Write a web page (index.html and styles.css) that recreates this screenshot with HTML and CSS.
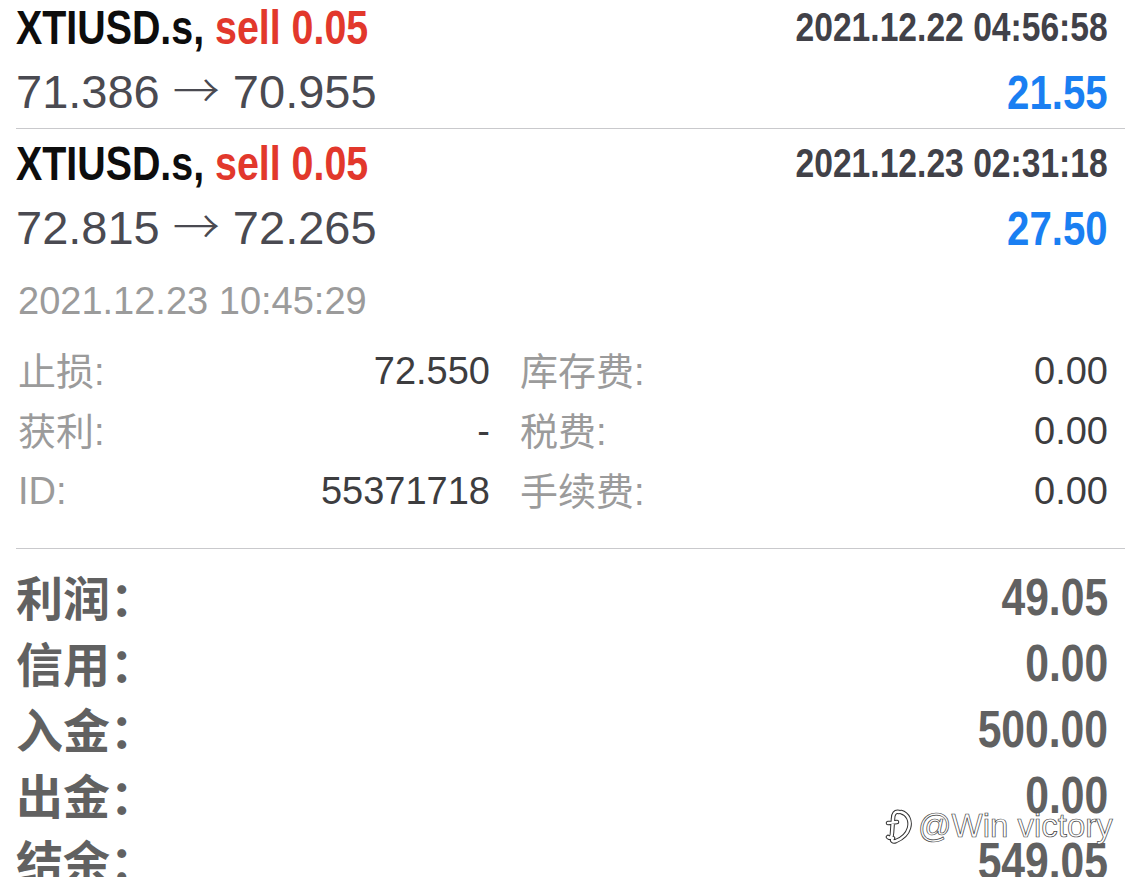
FILE: index.html
```html
<!DOCTYPE html>
<html lang="zh-CN">
<head>
    <meta charset="UTF-8">
    <title>历史</title>
    <link rel="stylesheet" href="styles.css">
</head>
<body>
    <div class="history">
        <div class="deal first">
            <div class="deal-head">
                <span class="symbol narrow">XTIUSD.s, <span class="side">sell 0.05</span></span>
                <span class="time narrow">2021.12.22 04:56:58</span>
            </div>
            <div class="deal-prices">
                <span class="prices">71.386 <span class="arrow">→</span> 70.955</span>
                <span class="profit narrow">21.55</span>
            </div>
        </div>

        <div class="deal open">
            <div class="deal-head">
                <span class="symbol narrow">XTIUSD.s, <span class="side">sell 0.05</span></span>
                <span class="time narrow">2021.12.23 02:31:18</span>
            </div>
            <div class="deal-prices">
                <span class="prices">72.815 <span class="arrow">→</span> 72.265</span>
                <span class="profit narrow">27.50</span>
            </div>
            <div class="close-time">2021.12.23 10:45:29</div>
            <div class="details">
                <span class="label cjk">止损:</span><span class="value">72.550</span>
                <span class="label cjk second">库存费:</span><span class="value">0.00</span>
                <span class="label cjk">获利:</span><span class="value">-</span>
                <span class="label cjk second">税费:</span><span class="value">0.00</span>
                <span class="label">ID:</span><span class="value">55371718</span>
                <span class="label cjk second">手续费:</span><span class="value">0.00</span>
            </div>
        </div>

        <div class="summary">
            <div class="sum-row"><span class="sum-label">利润：</span><span class="sum-value narrow">49.05</span></div>
            <div class="sum-row"><span class="sum-label">信用：</span><span class="sum-value narrow">0.00</span></div>
            <div class="sum-row"><span class="sum-label">入金：</span><span class="sum-value narrow">500.00</span></div>
            <div class="sum-row"><span class="sum-label">出金：</span><span class="sum-value narrow">0.00</span></div>
            <div class="sum-row"><span class="sum-label">结余：</span><span class="sum-value narrow">549.05</span></div>
        </div>
    </div>

    <div class="watermark">
        <svg class="wm-icon" width="28" height="36" viewBox="0 0 28 36">
            <g fill="none" stroke-linecap="round" stroke-linejoin="round">
                <path class="wm-outline" d="M14 4 C10 3 8 6 8 11 L7 25 C7 29 5 31 3 29 M3 15 L12 14 M16 4 C23 6 26 13 24 20 C22 27 16 31 11 33 C8 34 6 33 8 30"/>
                <path class="wm-fill" d="M14 4 C10 3 8 6 8 11 L7 25 C7 29 5 31 3 29 M3 15 L12 14 M16 4 C23 6 26 13 24 20 C22 27 16 31 11 33 C8 34 6 33 8 30"/>
            </g>
        </svg>
        <span class="wm-text">@Win victory</span>
    </div>
</body>
</html>
```

FILE: styles.css
```css
body, html {
    margin: 0;
    padding: 0;
    background: #fff;
    overflow: hidden;
    height: 100%;
}

body {
    position: relative;
    font-family: "Liberation Sans", "Noto Sans CJK SC", sans-serif;
}

.history {
    padding-left: 16px;
    margin-top: -7px;
}

/* condensed bold, like the app's Helvetica Condensed */
.narrow {
    display: inline-block;
    font-family: "Liberation Sans", sans-serif;
    font-weight: bold;
    transform: scaleX(0.82);
    transform-origin: right center;
    white-space: nowrap;
}

.deal {
    padding: 2px 17px 0 0;
}

.deal.first {
    padding-bottom: 3px;
    border-bottom: 1px solid #c9c9cc;
}

.deal.open {
    padding-bottom: 27px;
    border-bottom: 1px solid #c9c9cc;
}

.deal-head,
.deal-prices {
    display: flex;
    justify-content: space-between;
    align-items: center;
}

.deal-head {
    height: 64px;
}

.deal-prices {
    height: 66px;
}

.symbol {
    font-size: 48px;
    color: #0d0d0d;
    transform-origin: left center;
}

.side {
    color: #e2382c;
}

.time {
    font-size: 41px;
    color: #414148;
}

.prices {
    font-size: 47px;
    line-height: 54px;
    color: #4a4a51;
    white-space: nowrap;
}

.arrow {
    font-family: "Noto Sans CJK SC", sans-serif;
    font-weight: 300;
    line-height: 0;
}

.profit {
    font-size: 49px;
    color: #1a7ff2;
}

.close-time {
    height: 80px;
    line-height: 80px;
    font-size: 38px;
    color: #9b9b9b;
    padding-left: 2px;
}

.details {
    display: grid;
    grid-template-columns: 120px 352px 180px 438px;
    grid-auto-rows: 60px;
    align-items: center;
    padding-left: 2px;
    font-size: 38px;
    white-space: nowrap;
}

.label {
    color: #9b9b9b;
}

.label.cjk {
    margin-top: -6px;
}

.label.second {
    padding-left: 30px;
}

.value {
    color: #3d3d3f;
    text-align: right;
}

.summary {
    padding: 15px 17px 0 0;
}

.sum-row {
    display: flex;
    justify-content: space-between;
    align-items: center;
    height: 66px;
}

.sum-label {
    font-family: "Noto Sans CJK SC", sans-serif;
    font-weight: bold;
    font-size: 47px;
    color: #616161;
    margin-top: -4px;
}

.sum-value {
    font-size: 52px;
    color: #616161;
}

.watermark {
    position: absolute;
    left: 885px;
    top: 807px;
    display: flex;
    align-items: center;
    gap: 5px;
    white-space: nowrap;
}

.wm-outline {
    stroke: #333;
    stroke-width: 4.5;
}

.wm-fill {
    stroke: #fff;
    stroke-width: 2.5;
}

.wm-text {
    font-family: "Liberation Sans", sans-serif;
    font-size: 33px;
    color: #fff;
    -webkit-text-stroke: 0.7px #444;
}
```
